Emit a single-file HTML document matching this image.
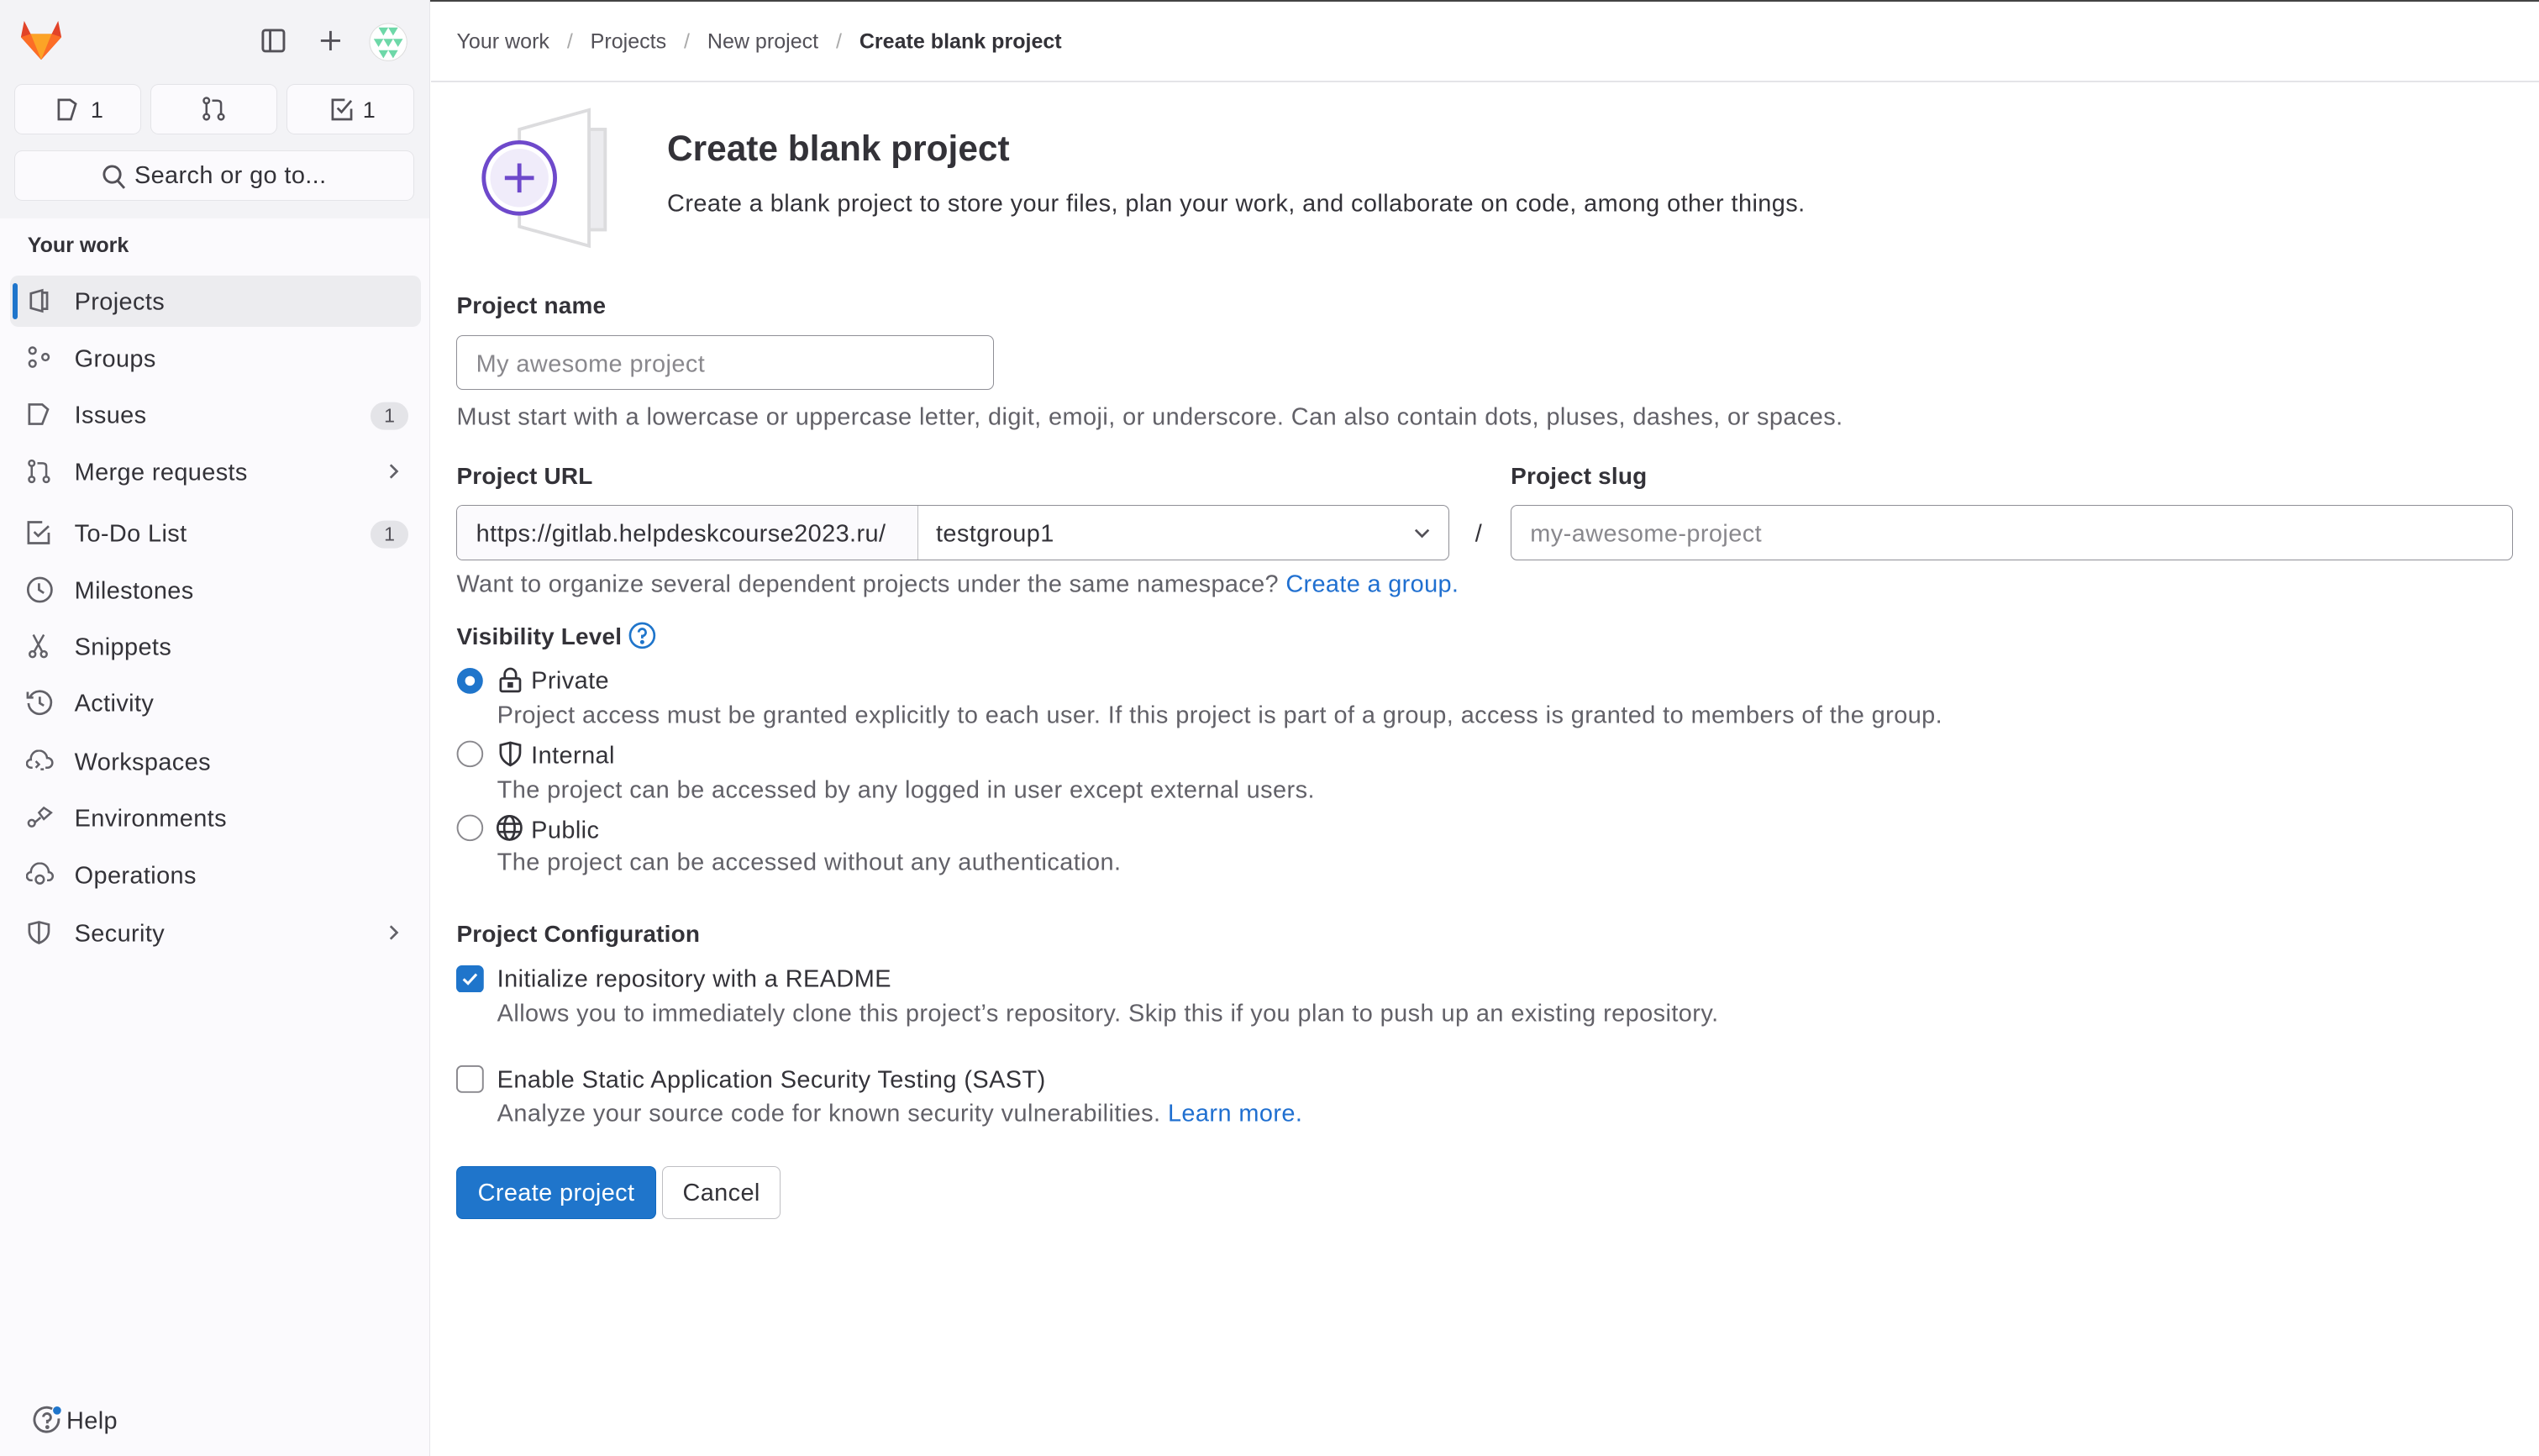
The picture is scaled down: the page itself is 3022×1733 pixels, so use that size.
<!DOCTYPE html>
<html><head><meta charset="utf-8"><style>
html,body{margin:0;padding:0;}
body{width:3022px;height:1732px;overflow:hidden;background:#fff;font-family:"Liberation Sans",sans-serif;color:#333238;}
#r{zoom:1.9273;width:1568px;height:899px;position:relative;}
.a{position:absolute;white-space:nowrap;}
.sb{position:absolute;left:0;top:0;width:265px;height:899px;background:#fbfafd;border-right:1px solid #e6e6ea;}
.sbt{position:absolute;left:0;top:0;width:265px;height:135px;background:#f3f3f6;}
.btn{position:absolute;background:#fbfafd;border:1px solid #e4e4e8;border-radius:5px;box-sizing:border-box;}
.nav{position:absolute;left:46px;font-size:15px;letter-spacing:.2px;color:#333238;transform:translateY(calc(-50% + 1px));}
.ic{position:absolute;left:16px;transform:translateY(-50%);}
.badge{position:absolute;left:229px;width:23px;height:17px;border-radius:9px;background:#e4e4e8;font-size:12px;text-align:center;line-height:17px;transform:translateY(-50%);color:#535158;}
.chev{position:absolute;left:238px;transform:translateY(-50%);}
.t{position:absolute;white-space:nowrap;font-size:15px;letter-spacing:.22px;transform:translateY(calc(-50% + 1px));}
.g{color:#626168;}
.b{font-weight:bold;font-size:14.5px;color:#333238;letter-spacing:.1px;}
.lnk{color:#1f6fd0;}
.inp{position:absolute;border:1px solid #8f8f96;border-radius:4px;box-sizing:border-box;}
</style></head><body><div id="r">
<div class="a" style="left:0;top:0;width:1568px;height:1px;background:#444;"></div>
<div class="sb"></div><div class="sbt"></div>
<svg class="a" style="left:12px;top:12px" width="27" height="26" viewBox="0 0 27 26"><path d="M3 1 L7 9 L20 9 L24 1 L26 11 L13.5 25 L1 11Z" fill="#e24329"/><path d="M1 11 L7 9 L13.5 25Z" fill="#fc6d26"/><path d="M26 11 L20 9 L13.5 25Z" fill="#fc6d26"/><path d="M7 9 L20 9 L13.5 25Z" fill="#fca326"/></svg>
<svg class="a" style="left:161px;top:17px" width="16" height="16" viewBox="0 0 16 16" fill="none" stroke="#535158" stroke-width="1.5"><rect x="1.5" y="1.5" width="13" height="13" rx="1.5"/><line x1="6" y1="1.5" x2="6" y2="14.5"/></svg>
<svg class="a" style="left:196px;top:17px" width="16" height="16" viewBox="0 0 16 16" stroke="#535158" stroke-width="1.5"><line x1="8" y1="2" x2="8" y2="14"/><line x1="2" y1="8" x2="14" y2="8"/></svg>
<svg class="a" style="left:228px;top:14px" width="24" height="24" viewBox="0 0 24 24"><circle cx="12" cy="12" r="11.5" fill="#fff" stroke="#ddd" stroke-width=".5"/><path d="M6 3 L9 8 L12 3Z M12 3 L15 8 L18 3Z M3 10 L6 15 L9 10Z M9 10 L12 15 L15 10Z M15 10 L18 15 L21 10Z M6 17 L9 22 L12 17Z M12 17 L15 22 L18 17Z" fill="#6ed8a8"/></svg>
<div class="btn" style="left:9px;top:52px;width:78px;height:31px"></div>
<div class="btn" style="left:93px;top:52px;width:78px;height:31px"></div>
<div class="btn" style="left:177px;top:52px;width:79px;height:31px"></div>
<svg class="a" style="left:35px;top:60px" width="14" height="15" viewBox="0 0 14 15" fill="none" stroke="#535158" stroke-width="1.4"><path d="M1.5 1.5 H8.5 L12 4 L9 13.5 H1.5Z"/></svg><div class="a" style="left:56px;top:60px;font-size:14px">1</div>
<svg class="a" style="left:124px;top:59px" width="16" height="16" viewBox="0 0 16 16" fill="none" stroke="#535158" stroke-width="1.3"><circle cx="3.5" cy="3" r="1.7"/><circle cx="3.5" cy="13" r="1.7"/><circle cx="12.5" cy="13" r="1.7"/><line x1="3.5" y1="4.7" x2="3.5" y2="11.3"/><path d="M12.5 11.3 V5 Q12.5 3 10 3 H7"/></svg>
<svg class="a" style="left:204px;top:60px" width="15" height="15" viewBox="0 0 15 15" fill="none" stroke="#535158" stroke-width="1.4"><path d="M13 7 V13.5 H1.5 V1.5 H9"/><path d="M4.5 6.5 L7 9 L13 2"/></svg><div class="a" style="left:224px;top:60px;font-size:14px">1</div>
<div class="btn" style="left:9px;top:93px;width:247px;height:31px"></div>
<svg class="a" style="left:63px;top:101px" width="15" height="16" viewBox="0 0 15 16" fill="none" stroke="#535158" stroke-width="1.5"><circle cx="6.5" cy="6.5" r="5"/><line x1="10" y1="10.5" x2="14" y2="15"/></svg>
<div class="a" style="left:83px;top:100px;font-size:15px;letter-spacing:.2px">Search or go to...</div>
<div class="a" style="left:17px;top:144px;font-size:13px;font-weight:bold">Your work</div>
<div class="a" style="left:6px;top:170px;width:254px;height:32px;background:#ececef;border-radius:5px"></div>
<div class="a" style="left:8px;top:175px;width:3px;height:22px;background:#1f75cb;border-radius:2px"></div>
<svg class="ic" style="top:186px" width="16" height="16" viewBox="0 0 16 16" fill="none" stroke="#626168" stroke-width="1.4"><path d="M3 3.5 L10 1.5 V14.5 L3 12.5Z"/><path d="M10 3 H13 V13 H10"/></svg>
<div class="nav" style="top:186px">Projects</div>
<svg class="ic" style="top:221px" width="16" height="16" viewBox="0 0 16 16" fill="none" stroke="#626168" stroke-width="1.3"><circle cx="4" cy="3.5" r="2"/><circle cx="4" cy="11.5" r="2"/><circle cx="12" cy="7.5" r="2"/></svg><div class="nav" style="top:221px">Groups</div>
<svg class="ic" style="top:256px" width="16" height="16" viewBox="0 0 16 16" fill="none" stroke="#626168" stroke-width="1.4"><path d="M2 2 H10 L13.5 5 L10 14 H2Z"/></svg><div class="nav" style="top:256px">Issues</div><div class="badge" style="top:257px">1</div>
<svg class="ic" style="top:291px" width="16" height="16" viewBox="0 0 16 16" fill="none" stroke="#626168" stroke-width="1.3"><circle cx="3.5" cy="3" r="1.7"/><circle cx="3.5" cy="13" r="1.7"/><circle cx="12.5" cy="13" r="1.7"/><line x1="3.5" y1="4.7" x2="3.5" y2="11.3"/><path d="M12.5 11.3 V5 Q12.5 3 10 3 H7"/></svg><div class="nav" style="top:291px">Merge requests</div>
<svg class="chev" style="top:291px" width="10" height="12" viewBox="0 0 10 12" fill="none" stroke="#626168" stroke-width="1.4"><path d="M3 2 L7 6 L3 10"/></svg>
<svg class="ic" style="top:329px" width="16" height="16" viewBox="0 0 16 16" fill="none" stroke="#626168" stroke-width="1.4"><path d="M14 8 V14.5 H1.5 V1.5 H10"/><path d="M5 7.5 L7.5 10 L14 4"/></svg><div class="nav" style="top:329px">To-Do List</div><div class="badge" style="top:330px">1</div>
<svg class="ic" style="top:364px" width="17" height="17" viewBox="0 0 17 17" fill="none" stroke="#626168" stroke-width="1.4"><circle cx="8.5" cy="8.5" r="7.3"/><path d="M8 4.5 V8.5 L11 10.5"/></svg><div class="nav" style="top:364px">Milestones</div>
<svg class="ic" style="top:399px" width="16" height="16" viewBox="0 0 16 16" fill="none" stroke="#626168" stroke-width="1.3"><circle cx="4" cy="13" r="1.8"/><circle cx="11" cy="13" r="1.8"/><path d="M4.5 1 L10 11.5 M11 1 L5 11.5"/></svg><div class="nav" style="top:399px">Snippets</div>
<svg class="ic" style="top:434px" width="17" height="17" viewBox="0 0 17 17" fill="none" stroke="#626168" stroke-width="1.4"><path d="M2.5 5 A7 7 0 1 1 1.5 9"/><path d="M1 2 V5.5 H4.5"/><path d="M8.5 5 V9 L11 10.5"/></svg><div class="nav" style="top:434px">Activity</div>
<svg class="ic" style="top:470px" width="17" height="14" viewBox="0 0 17 14" fill="none" stroke="#626168" stroke-width="1.3"><path d="M4 11 H3 A2.5 2.5 0 0 1 3 6 A5 5 0 0 1 13 5 A3 3 0 0 1 13.5 11 H12"/><path d="M6 7 L8 9 L6 11 M9 12 H11"/></svg><div class="nav" style="top:470px">Workspaces</div>
<svg class="ic" style="top:505px" width="17" height="14" viewBox="0 0 17 14" fill="none" stroke="#626168" stroke-width="1.3"><circle cx="3.5" cy="10.5" r="2"/><path d="M5.5 10 L9 7 M8 4 L11 1 L15.5 4 L11 8Z"/></svg><div class="nav" style="top:505px">Environments</div>
<svg class="ic" style="top:540px" width="17" height="15" viewBox="0 0 17 15" fill="none" stroke="#626168" stroke-width="1.3"><path d="M4 11 H3 A2.5 2.5 0 0 1 3 6 A5.5 5.5 0 0 1 14 6 A2.5 2.5 0 0 1 14 11 H13"/><circle cx="8.5" cy="10.5" r="2.5"/></svg><div class="nav" style="top:540px">Operations</div>
<svg class="ic" style="top:576px" width="16" height="16" viewBox="0 0 16 16" fill="none" stroke="#626168" stroke-width="1.4"><path d="M2 3 L8 1.5 L14 3 V7 Q14 12 8 14.5 Q2 12 2 7Z"/><line x1="8" y1="1.5" x2="8" y2="14.5"/></svg><div class="nav" style="top:576px">Security</div>
<svg class="chev" style="top:576px" width="10" height="12" viewBox="0 0 10 12" fill="none" stroke="#626168" stroke-width="1.4"><path d="M3 2 L7 6 L3 10"/></svg>
<svg class="a" style="left:20px;top:868px" width="18" height="18" viewBox="0 0 18 18" fill="none" stroke="#626168" stroke-width="1.5"><path d="M12 2 A7.5 7.5 0 1 0 16 8"/><path d="M6.5 7 A2.3 2.3 0 1 1 9 9.5 V11"/><circle cx="9" cy="13.3" r=".5" fill="#626168"/><circle cx="15" cy="3" r="2.5" fill="#1f75cb" stroke="none"/></svg>
<div class="nav" style="left:41px;top:877px">Help</div>

<div class="t" style="left:282px;top:25px;font-size:13px;color:#535158;letter-spacing:0">Your work&nbsp;&nbsp;&nbsp;<span style="color:#aaa">/</span>&nbsp;&nbsp;&nbsp;Projects&nbsp;&nbsp;&nbsp;<span style="color:#aaa">/</span>&nbsp;&nbsp;&nbsp;New project&nbsp;&nbsp;&nbsp;<span style="color:#aaa">/</span>&nbsp;&nbsp;&nbsp;<b style="color:#333238">Create blank project</b></div>
<div class="a" style="left:266px;top:50px;width:1302px;height:1px;background:#e4e4e8"></div>
<svg class="a" style="left:296px;top:66px" width="88" height="88" viewBox="0 0 88 88"><rect x="64" y="14" width="14" height="62" fill="#ececef" stroke="#dcdcde" stroke-width="2"/><path d="M25 14 L68 2 V86 L25 74Z" fill="#fff" stroke="#dcdcde" stroke-width="2"/><circle cx="25" cy="44" r="22" fill="#fff" stroke="#6e49cb" stroke-width="2.5"/><circle cx="25" cy="44" r="18" fill="#f0ecfa"/><path d="M25 35 V53 M16 44 H34" stroke="#6e49cb" stroke-width="2.5"/></svg>
<div class="t" style="left:412px;top:91px;font-size:22px;font-weight:bold;letter-spacing:0">Create blank project</div>
<div class="t" style="left:412px;top:125px">Create a blank project to store your files, plan your work, and collaborate on code, among other things.</div>

<div class="t b" style="left:282px;top:188px">Project name</div>
<div class="inp" style="left:282px;top:207px;width:332px;height:34px"></div>
<div class="t" style="left:294px;top:224px;color:#89888d">My awesome project</div>
<div class="t g" style="left:282px;top:257px">Must start with a lowercase or uppercase letter, digit, emoji, or underscore. Can also contain dots, pluses, dashes, or spaces.</div>

<div class="t b" style="left:282px;top:293px">Project URL</div>
<div class="t b" style="left:933px;top:293px">Project slug</div>
<div class="inp" style="left:282px;top:312px;width:613px;height:34px;overflow:hidden"><div style="width:284px;height:100%;background:#fbfafd;border-right:1px solid #bfbfc3"></div></div>
<div class="t" style="left:294px;top:329px">https://gitlab.helpdeskcourse2023.ru/</div>
<div class="t" style="left:578px;top:329px">testgroup1</div>
<svg class="a" style="left:872px;top:323px" width="12" height="12" viewBox="0 0 12 12" fill="none" stroke="#535158" stroke-width="1.4"><path d="M2 4 L6 8 L10 4"/></svg>
<div class="t" style="left:911px;top:329px">/</div>
<div class="inp" style="left:933px;top:312px;width:619px;height:34px"></div>
<div class="t" style="left:945px;top:329px;color:#89888d">my-awesome-project</div>
<div class="t g" style="left:282px;top:360px;letter-spacing:.18px">Want to organize several dependent projects under the same namespace? <span class="lnk">Create a group.</span></div>

<div class="t b" style="left:282px;top:392px">Visibility Level</div>
<svg class="a" style="left:388px;top:384px" width="17" height="17" viewBox="0 0 17 17" fill="none" stroke="#1f75cb" stroke-width="1.4"><circle cx="8.5" cy="8.5" r="7.5"/><path d="M6.3 6.5 A2.2 2.2 0 1 1 8.5 8.8 V10.3"/><circle cx="8.5" cy="12.6" r=".6" fill="#1f75cb"/></svg>
<svg class="a" style="left:282px;top:412px" width="17" height="17" viewBox="0 0 17 17"><circle cx="8.5" cy="8.5" r="8" fill="#1f75cb"/><circle cx="8.5" cy="8.5" r="3" fill="#fff"/></svg>
<svg class="a" style="left:307px;top:412px" width="16" height="16" viewBox="0 0 16 16" fill="none" stroke="#333238" stroke-width="1.4"><rect x="2" y="7" width="12" height="8" rx="1"/><path d="M4.5 7 V4.5 A3.5 3.5 0 0 1 11.5 4.5 V7"/><rect x="7" y="10" width="2" height="2" fill="#333238"/></svg>
<div class="t" style="left:328px;top:420px">Private</div>
<div class="t g" style="left:307px;top:441px">Project access must be granted explicitly to each user. If this project is part of a group, access is granted to members of the group.</div>
<svg class="a" style="left:282px;top:457px" width="17" height="17" viewBox="0 0 17 17"><circle cx="8.5" cy="8.5" r="7.7" fill="#fff" stroke="#89888d" stroke-width="1"/></svg>
<svg class="a" style="left:307px;top:457px" width="16" height="17" viewBox="0 0 16 17" fill="none" stroke="#333238" stroke-width="1.4"><path d="M2 3 L8 1.5 L14 3 V7.5 Q14 12.5 8 15.5 Q2 12.5 2 7.5Z"/><line x1="8" y1="1.5" x2="8" y2="15.5"/></svg>
<div class="t" style="left:328px;top:466px">Internal</div>
<div class="t g" style="left:307px;top:487px">The project can be accessed by any logged in user except external users.</div>
<svg class="a" style="left:282px;top:503px" width="17" height="17" viewBox="0 0 17 17"><circle cx="8.5" cy="8.5" r="7.7" fill="#fff" stroke="#89888d" stroke-width="1"/></svg>
<svg class="a" style="left:306px;top:503px" width="17" height="17" viewBox="0 0 17 17" fill="none" stroke="#333238" stroke-width="1.4"><circle cx="8.5" cy="8.5" r="7.3"/><ellipse cx="8.5" cy="8.5" rx="3.2" ry="7.3"/><line x1="1.2" y1="6" x2="15.8" y2="6"/><line x1="1.2" y1="11" x2="15.8" y2="11"/></svg>
<div class="t" style="left:328px;top:512px">Public</div>
<div class="t g" style="left:307px;top:532px">The project can be accessed without any authentication.</div>

<div class="t b" style="left:282px;top:576px">Project Configuration</div>
<svg class="a" style="left:282px;top:596px" width="17" height="17" viewBox="0 0 17 17"><rect x=".5" y=".5" width="16" height="16" rx="3" fill="#1f75cb" stroke="#1f75cb"/><path d="M4.5 8.5 L7.3 11.2 L12.5 5.5" fill="none" stroke="#fff" stroke-width="1.6"/></svg>
<div class="t" style="left:307px;top:604px">Initialize repository with a README</div>
<div class="t g" style="left:307px;top:625px">Allows you to immediately clone this project’s repository. Skip this if you plan to push up an existing repository.</div>
<svg class="a" style="left:282px;top:658px" width="17" height="17" viewBox="0 0 17 17"><rect x=".5" y=".5" width="16" height="16" rx="3" fill="#fff" stroke="#89888d"/></svg>
<div class="t" style="left:307px;top:666px">Enable Static Application Security Testing (SAST)</div>
<div class="t g" style="left:307px;top:687px">Analyze your source code for known security vulnerabilities. <span class="lnk">Learn more.</span></div>

<div class="a" style="left:282px;top:720px;width:123px;height:33px;background:#1f75cb;border:1px solid #1068bf;border-radius:4px;box-sizing:border-box;color:#fff;font-size:15px;text-align:center;line-height:33px;letter-spacing:.2px">Create project</div>
<div class="a" style="left:409px;top:720px;width:73px;height:33px;background:#fff;border:1px solid #bfbfc3;border-radius:4px;box-sizing:border-box;font-size:15px;text-align:center;line-height:33px;letter-spacing:.2px">Cancel</div>
</div></body></html>
